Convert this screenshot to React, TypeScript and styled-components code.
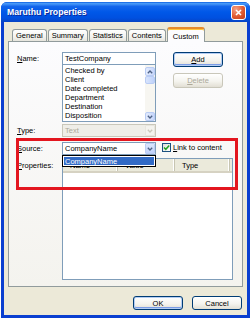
import React, { FC } from 'react';
import styled, { createGlobalStyle, css } from 'styled-components';

const GlobalStyle = createGlobalStyle`
  html, body {
    margin: 0;
    padding: 0;
    background: #fff;
  }
  body {
    font-family: "Liberation Sans", Arial, sans-serif;
    font-size: 7.5px;
    color: #000;
  }
  #root {
    width: 252px;
    height: 320px;
    overflow: hidden;
  }
`;

const Window = styled.div`
    width: 249px;
    height: 316px;
    margin: 2px 0 0 1px;
    display: flex;
    flex-direction: column;
    border-radius: 6px 6px 0 0;
    overflow: hidden;
    background: #0a3fd0;
`;

const TitleBar = styled.div`
    height: 20px;
    flex: none;
    display: flex;
    align-items: center;
    justify-content: space-between;
    padding: 0 4px 0 6px;
    background: linear-gradient(to bottom, #0b5fe2 0%, #4b9cf8 8%, #1466ec 22%, #0058e8 50%, #0050e0 80%, #0744c4 100%);
`;

const Title = styled.span`
    color: #fff;
    font-weight: bold;
    font-size: 8.7px;
    text-shadow: 1px 1px 0 #0a2a9e;
`;

const CloseButton = styled.div`
    width: 15px;
    height: 15px;
    box-sizing: border-box;
    border: 1px solid #fff;
    border-radius: 3px;
    background: radial-gradient(circle at 30% 25%, #f4a085, #e05a31 55%, #c13b1a);
    display: flex;
    align-items: center;
    justify-content: center;
`;

const Frame = styled.div`
    flex: 1;
    display: flex;
    padding: 0 3px 3px;
`;

const Body = styled.div`
    flex: 1;
    background: #ece9d8;
    display: flex;
    flex-direction: column;
    padding: 5px 4px 0 4px;
`;

const TabsRow = styled.div`
    height: 14px;
    display: flex;
    align-items: flex-end;
    padding-left: 4px;
    gap: 1px;
`;

const Tab = styled.div<{ $active?: boolean }>`
    height: 12px;
    box-sizing: border-box;
    padding: 0 3px;
    display: flex;
    align-items: center;
    border: 1px solid #919b9c;
    border-bottom: none;
    border-radius: 3px 3px 0 0;
    background: linear-gradient(#ffffff, #f3f3ef 60%, #e6e5dd);
    ${({ $active }) => $active && css`
        height: 15px;
        margin: 0 -1px -1px 0;
        padding: 1px 5px 0;
        position: relative;
        z-index: 1;
        border-top: 2px solid #e68b2c;
        box-shadow: inset 0 1px 0 #ffc73c;
        background: #fcfcfe;
    `}
`;

const Panel = styled.div`
    position: relative;
    height: 246px;
    box-sizing: border-box;
    border: 1px solid #919b9c;
    background: linear-gradient(#fcfcfe, #f4f3ee);
    padding: 10px 0 0 8px;
    display: grid;
    grid-template-columns: 45px 94px 1fr;
    grid-template-rows: 13px 57px 15px 18px 125px;
    align-items: end;
`;

const Label = styled.div<{ $top?: boolean }>`
    grid-column: 1;
    line-height: 13px;
    white-space: nowrap;
    ${({ $top }) => $top && css`
        align-self: start;
        margin-top: 3px;
        line-height: 15px;
    `}
`;

const TextBox = styled.div`
    grid-column: 2;
    height: 13px;
    box-sizing: border-box;
    border: 1px solid #7f9db9;
    background: #fff;
    padding-left: 2px;
    display: flex;
    align-items: center;
`;

const ListBox = styled.div`
    grid-column: 2;
    height: 57px;
    box-sizing: border-box;
    border: 1px solid #7f9db9;
    border-top: none;
    background: #fff;
    display: flex;
`;

const Items = styled.div`
    flex: 1;
    padding: 1px 0 0 2px;
    line-height: 9px;
    white-space: nowrap;
`;

const ScrollBar = styled.div`
    width: 10px;
    display: flex;
    flex-direction: column;
    padding-top: 2px;
    background: #f7f6f1;
`;

const ScrollBtn = styled.div<{ $thumb?: boolean }>`
    height: 9px;
    box-sizing: border-box;
    border: 1px solid #b9ccf4;
    border-radius: 2px;
    background: linear-gradient(to right, #e4ecfd, #c6d6fb);
    display: flex;
    align-items: center;
    justify-content: center;
    ${({ $thumb }) => $thumb && css`
        height: 8px;
        background: linear-gradient(to right, #d9e5fd, #bfd2fa);
    `}
`;

const ScrollSpacer = styled.div`
    flex: 1;
`;

const ButtonStack = styled.div`
    grid-column: 3;
    grid-row: 1 / span 2;
    align-self: start;
    margin-left: 17px;
    display: flex;
    flex-direction: column;
    gap: 6px;
`;

const Button = styled.div<{ $disabled?: boolean; $focus?: boolean; $h?: number }>`
    width: 50px;
    height: ${({ $h }) => $h ?? 15}px;
    box-sizing: border-box;
    border: 1px solid ${({ $disabled }) => ($disabled ? '#c9c7ba' : '#003c74')};
    border-radius: 3px;
    background: linear-gradient(#ffffff, #f5f4ef 55%, #e2dfd4);
    display: flex;
    align-items: center;
    justify-content: center;
    color: ${({ $disabled }) => ($disabled ? '#aca899' : '#000')};
    ${({ $focus }) => $focus && css`
        box-shadow: inset 0 0 0 1px #b4cdf3, inset 0 -1px 0 1px #7b9ce6;
    `}
`;

const Combo = styled.div<{ $disabled?: boolean }>`
    grid-column: 2;
    position: relative;
    height: 13px;
    box-sizing: border-box;
    border: 1px solid ${({ $disabled }) => ($disabled ? '#c9c7ba' : '#7f9db9')};
    background: ${({ $disabled }) => ($disabled ? '#efeee8' : '#fff')};
    color: ${({ $disabled }) => ($disabled ? '#aca899' : '#000')};
    display: flex;
    align-items: center;
    padding-left: 2px;
`;

const ComboText = styled.span`
    flex: 1;
`;

const DropBtn = styled.div<{ $disabled?: boolean }>`
    width: 10px;
    height: 100%;
    box-sizing: border-box;
    border-radius: 1px;
    display: flex;
    align-items: center;
    justify-content: center;
    background: ${({ $disabled }) =>
        $disabled ? '#f4f3ee' : 'linear-gradient(#dce7fd, #c0d2fb)'};
    border: 1px solid ${({ $disabled }) => ($disabled ? '#e8e6de' : '#bccdf5')};
`;

const Popup = styled.div`
    position: absolute;
    top: calc(100% + 1px);
    left: -1px;
    right: -1px;
    height: 12px;
    box-sizing: border-box;
    border: 1px solid #000;
    background: #fff;
    padding: 1px;
    z-index: 2;
`;

const PopupItem = styled.div`
    height: 100%;
    background: #316ac5;
    color: #fff;
    display: flex;
    align-items: center;
    padding-left: 1px;
`;

const CheckRow = styled.div`
    grid-column: 3;
    align-self: center;
    margin: 3px 0 0 6px;
    display: flex;
    align-items: center;
    gap: 2px;
    white-space: nowrap;
`;

const CheckBox = styled.div`
    width: 9px;
    height: 9px;
    box-sizing: border-box;
    border: 1px solid #1c5180;
    background: linear-gradient(135deg, #dcdcd7, #fff);
    display: flex;
    align-items: center;
    justify-content: center;
`;

const ListView = styled.div`
    grid-column: 2 / span 2;
    width: 171px;
    height: 122px;
    box-sizing: border-box;
    border: 1px solid #7f9db9;
    background: #fff;
`;

const HeaderRow = styled.div`
    height: 14px;
    display: flex;
    background: #ebeadb;
    border-bottom: 2px solid #d6d2c2;
    box-sizing: border-box;
`;

const HeaderCell = styled.div<{ $w: number }>`
    width: ${({ $w }) => $w}px;
    box-sizing: border-box;
    padding-left: 7px;
    display: flex;
    align-items: center;
    border-right: 1px solid #c7c5b2;
    box-shadow: inset -1px 0 0 #fff;
`;

const Annotation = styled.div`
    position: absolute;
    left: 7px;
    top: 96px;
    width: 222px;
    height: 52px;
    box-sizing: border-box;
    border: 3px solid #e3161f;
    pointer-events: none;
`;

const Footer = styled.div`
    display: flex;
    justify-content: flex-end;
    gap: 9px;
    padding: 9px 1px 0 0;
`;

const Chevron: FC<{ color: string; up?: boolean }> = ({ color, up }) => (
    <svg width="6" height="4" viewBox="0 0 6 4">
        <path
            d={up ? 'M0.8 3.3 L3 1 L5.2 3.3' : 'M0.8 0.8 L3 3 L5.2 0.8'}
            fill="none"
            stroke={color}
            strokeWidth="1.3"
        />
    </svg>
);

const listItems = ['Checked by', 'Client', 'Date completed', 'Department', 'Destination', 'Disposition'];
const tabs = ['General', 'Summary', 'Statistics', 'Contents', 'Custom'];

const App: FC = () => {
    return (
        <>
            <GlobalStyle />
            <Window>
                <TitleBar>
                    <Title>Maruthu Properties</Title>
                    <CloseButton>
                        <svg width="7" height="7" viewBox="0 0 7 7">
                            <path d="M1 1 L6 6 M6 1 L1 6" stroke="#fff" strokeWidth="1.6" />
                        </svg>
                    </CloseButton>
                </TitleBar>
                <Frame>
                    <Body>
                        <TabsRow>
                            {tabs.map((t) => (
                                <Tab key={t} $active={t === 'Custom'}>{t}</Tab>
                            ))}
                        </TabsRow>
                        <Panel>
                            <Label><u>N</u>ame:</Label>
                            <TextBox>TestCompany</TextBox>
                            <ButtonStack>
                                <Button $focus><u>A</u>dd</Button>
                                <Button $disabled><u>D</u>elete</Button>
                            </ButtonStack>

                            <ListBox>
                                <Items>
                                    {listItems.map((item) => (
                                        <div key={item}>{item}</div>
                                    ))}
                                </Items>
                                <ScrollBar>
                                    <ScrollBtn><Chevron color="#4d6185" up /></ScrollBtn>
                                    <ScrollBtn $thumb />
                                    <ScrollSpacer />
                                    <ScrollBtn><Chevron color="#4d6185" /></ScrollBtn>
                                </ScrollBar>
                            </ListBox>

                            <Label><u>T</u>ype:</Label>
                            <Combo $disabled>
                                <ComboText>Text</ComboText>
                                <DropBtn $disabled><Chevron color="#c9c7ba" /></DropBtn>
                            </Combo>

                            <Label><u>S</u>ource:</Label>
                            <Combo>
                                <ComboText>CompanyName</ComboText>
                                <DropBtn><Chevron color="#4d6185" /></DropBtn>
                                <Popup>
                                    <PopupItem>CompanyName</PopupItem>
                                </Popup>
                            </Combo>
                            <CheckRow>
                                <CheckBox>
                                    <svg width="7" height="7" viewBox="0 0 7 7">
                                        <path d="M1 3.4 L2.8 5.3 L6.2 1.4" fill="none" stroke="#21a121" strokeWidth="1.5" />
                                    </svg>
                                </CheckBox>
                                <span><u>L</u>ink to content</span>
                            </CheckRow>

                            <Label $top><u>P</u>roperties:</Label>
                            <ListView>
                                <HeaderRow>
                                    <HeaderCell $w={55}>Name</HeaderCell>
                                    <HeaderCell $w={57}>Value</HeaderCell>
                                    <HeaderCell $w={55}>Type</HeaderCell>
                                </HeaderRow>
                            </ListView>

                            <Annotation />
                        </Panel>
                        <Footer>
                            <Button $h={14} $focus>OK</Button>
                            <Button $h={14}>Cancel</Button>
                        </Footer>
                    </Body>
                </Frame>
            </Window>
        </>
    );
};

export default App;
